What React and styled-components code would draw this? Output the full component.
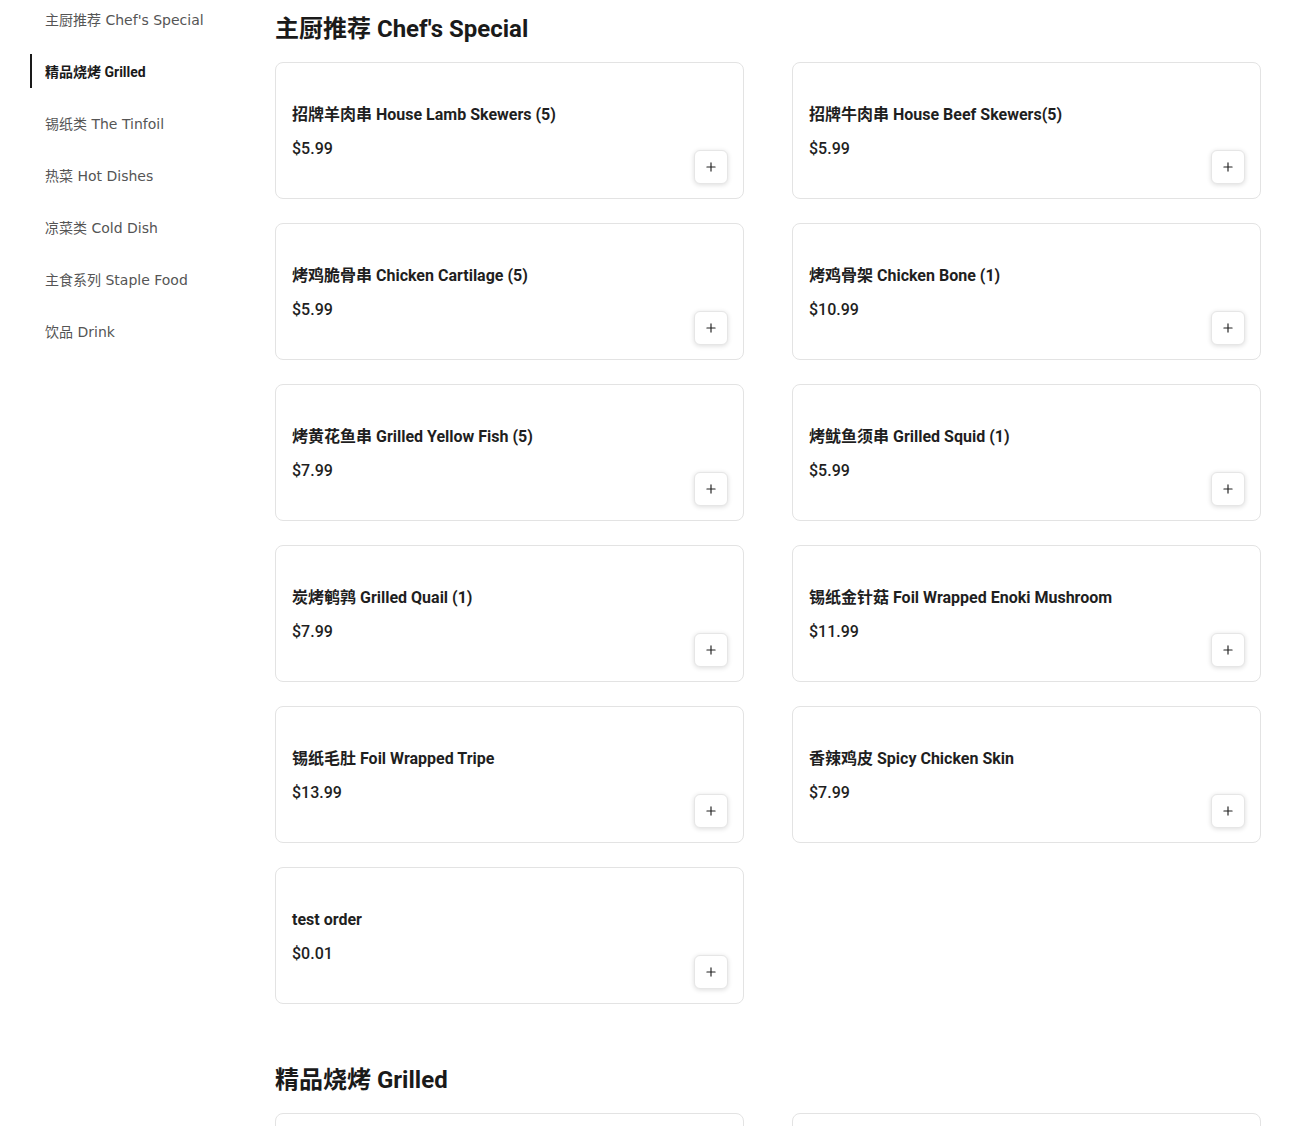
import React from 'react';
import styled, { createGlobalStyle } from 'styled-components';
import { Plus } from 'lucide-react';

const GlobalStyle = createGlobalStyle`
  html, body {
    margin: 0;
    padding: 0;
    background: #ffffff;
  }
  body {
    font-family: Roboto, "Noto Sans CJK SC", sans-serif;
    color: #1f1f1f;
  }
`;

const categories = [
  { id: 'special', name: "主厨推荐 Chef's Special" },
  { id: 'grilled', name: '精品烧烤 Grilled' },
  { id: 'tinfoil', name: '锡纸类 The Tinfoil' },
  { id: 'hot', name: '热菜 Hot Dishes' },
  { id: 'cold', name: '凉菜类 Cold Dish' },
  { id: 'staple', name: '主食系列 Staple Food' },
  { id: 'drink', name: '饮品 Drink' }
];

const specials = [
  { name: '招牌羊肉串 House Lamb Skewers (5)', price: 5.99 },
  { name: '招牌牛肉串 House Beef Skewers(5)', price: 5.99 },
  { name: '烤鸡脆骨串 Chicken Cartilage (5)', price: 5.99 },
  { name: '烤鸡骨架 Chicken Bone (1)', price: 10.99 },
  { name: '烤黄花鱼串 Grilled Yellow Fish (5)', price: 7.99 },
  { name: '烤鱿鱼须串 Grilled Squid (1)', price: 5.99 },
  { name: '炭烤鹌鹑 Grilled Quail (1)', price: 7.99 },
  { name: '锡纸金针菇 Foil Wrapped Enoki Mushroom', price: 11.99 },
  { name: '锡纸毛肚 Foil Wrapped Tripe', price: 13.99 },
  { name: '香辣鸡皮 Spicy Chicken Skin', price: 7.99 },
  { name: 'test order', price: 0.01 }
];

const grilled = [
  { name: '招牌羊肉串 House Lamb Skewers (5)', price: 5.99 },
  { name: '招牌牛肉串 House Beef Skewers(5)', price: 5.99 }
];

const Page = styled.div`
  display: flex;
  align-items: flex-start;
  padding-left: 30px;
  padding-right: 29px;
`;

const Sidebar = styled.nav`
  width: 245px;
  flex-shrink: 0;
  display: flex;
  flex-direction: column;
  gap: 18px;
  padding-top: 2px;
`;

const NavItem = styled.div`
  height: 34px;
  display: flex;
  align-items: center;
  padding-left: ${p => (p.$active ? '13px' : '15px')};
  border-left: ${p => (p.$active ? '2px solid #1a1a1a' : 'none')};
  font-family: ${p => (p.$active ? 'Roboto' : '"DejaVu Sans"')}, "Noto Sans CJK SC", sans-serif;
  font-size: 14px;
  font-weight: ${p => (p.$active ? 700 : 400)};
  color: ${p => (p.$active ? '#1a1a1a' : '#555555')};
  white-space: nowrap;
`;

const Main = styled.main`
  flex: 1;
  display: flex;
  flex-direction: column;
  gap: 60px;
  padding-top: 13px;
`;

const Section = styled.section`
  display: flex;
  flex-direction: column;
  gap: 17px;
`;

const Heading = styled.h2`
  margin: 0;
  font-size: 24px;
  line-height: 32px;
  font-weight: 700;
  color: #1a1a1a;
`;

const Grid = styled.div`
  display: grid;
  grid-template-columns: 1fr 1fr;
  column-gap: 48px;
  row-gap: 24px;
`;

const Card = styled.div`
  height: 137px;
  box-sizing: border-box;
  border: 1px solid #e3e3e3;
  border-radius: 8px;
  padding: 40px 16px 15px 16px;
  display: flex;
  flex-direction: column;
  background: #fff;
`;

const Title = styled.div`
  font-size: 16px;
  line-height: 24px;
  font-weight: 700;
  color: #1f1f1f;
`;

const Bottom = styled.div`
  display: flex;
  justify-content: space-between;
  align-items: flex-start;
  margin-top: 10px;
`;

const Price = styled.div`
  font-size: 16px;
  line-height: 24px;
  font-weight: 500;
  color: #1f1f1f;
`;

const AddButton = styled.button`
  width: 34px;
  height: 34px;
  margin-top: 13px;
  margin-right: -1px;
  border: 1px solid #e6e6e6;
  border-radius: 6px;
  background: #fff;
  box-shadow: 0 1px 5px rgba(0, 0, 0, 0.14);
  display: flex;
  align-items: center;
  justify-content: center;
  padding: 0;
  color: #222;
  cursor: pointer;
`;

function DishCard({ dish }) {
  return (
    <Card>
      <Title>{dish.name}</Title>
      <Bottom>
        <Price>${dish.price.toFixed(2)}</Price>
        <AddButton aria-label="add">
          <Plus size={14} strokeWidth={2} />
        </AddButton>
      </Bottom>
    </Card>
  );
}

export default function App() {
  return (
    <>
      <GlobalStyle />
      <Page>
        <Sidebar>
          {categories.map(c => (
            <NavItem key={c.id} $active={c.id === 'grilled'}>{c.name}</NavItem>
          ))}
        </Sidebar>
        <Main>
          <Section>
            <Heading>主厨推荐 Chef's Special</Heading>
            <Grid>
              {specials.map((d, i) => <DishCard key={i} dish={d} />)}
            </Grid>
          </Section>
          <Section>
            <Heading>精品烧烤 Grilled</Heading>
            <Grid>
              {grilled.map((d, i) => <DishCard key={i} dish={d} />)}
            </Grid>
          </Section>
        </Main>
      </Page>
    </>
  );
}
